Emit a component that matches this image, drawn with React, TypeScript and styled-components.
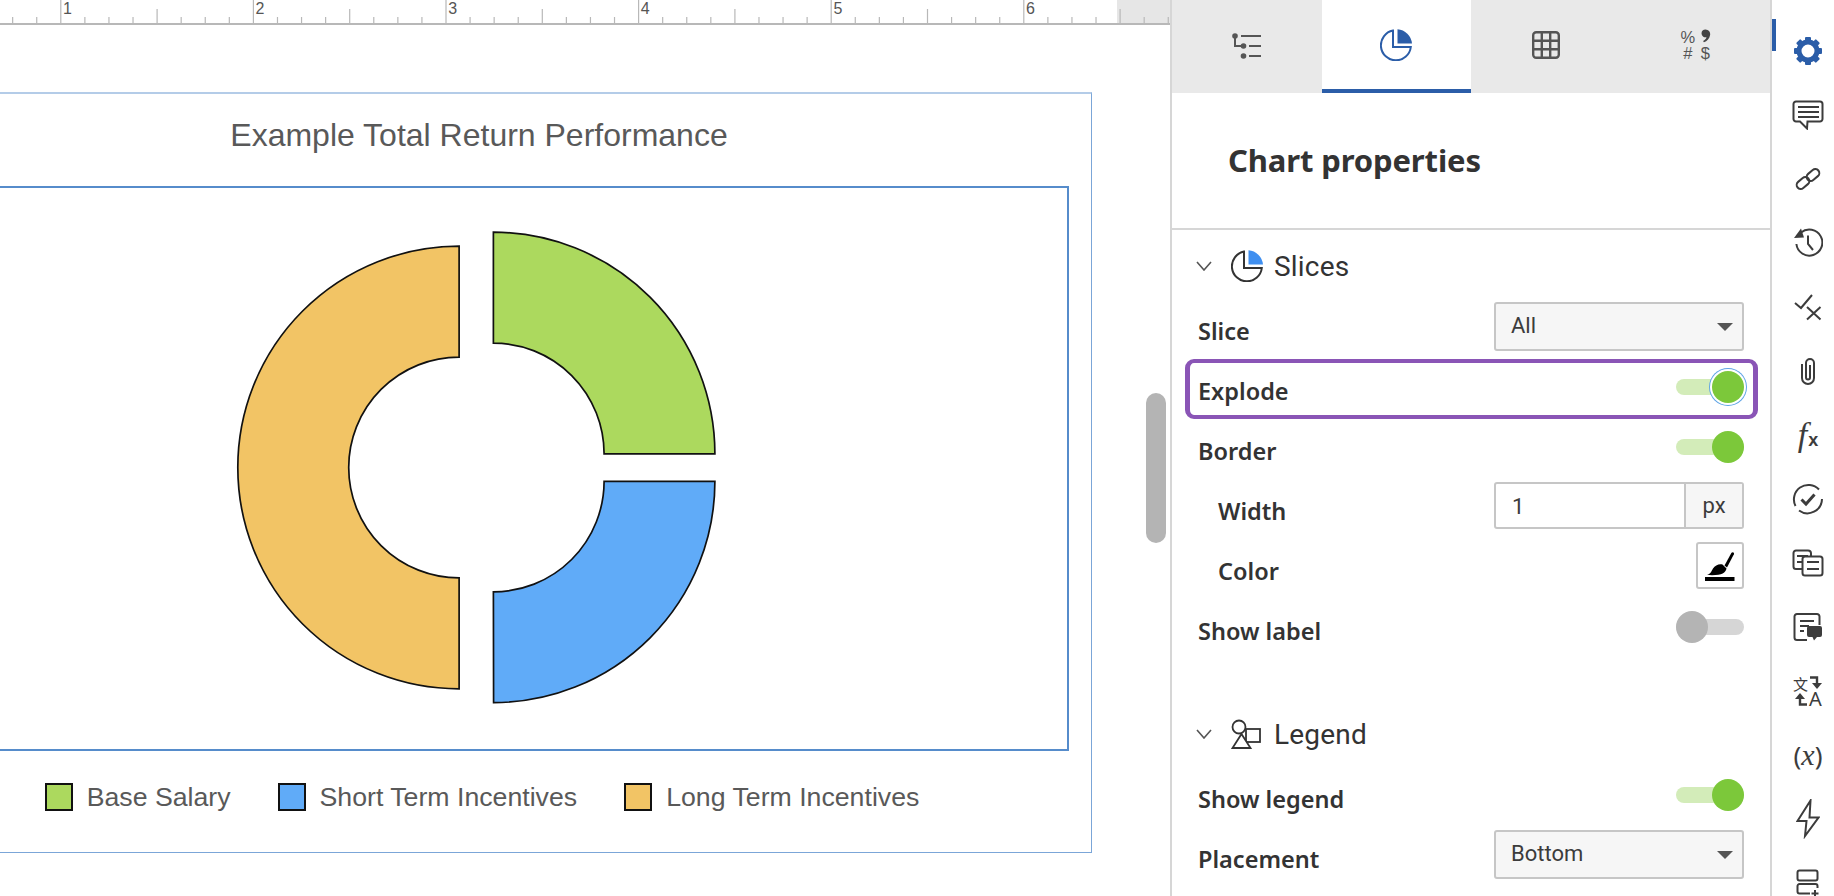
import React from "react";
import styled, { createGlobalStyle } from "styled-components";

const Global = createGlobalStyle`
  html, body { margin: 0; padding: 0; background: #fff; overflow: hidden; }
  #root { width: 1834px; height: 896px; }
  * { box-sizing: border-box; }
`;

const Page = styled.div`
  display: flex;
  width: 1834px;
  height: 896px;
  overflow: hidden;
  background: #fff;
  font-family: Roboto, "Noto Sans", sans-serif;
  color: #333;
`;

/* ---------- document canvas ---------- */
const Canvas = styled.main`
  position: relative;
  width: 1170px;
  flex: none;
  overflow: hidden;
`;
const RulerSvg = styled.svg`
  display: block;
  width: 1170px;
  height: 25px;
`;
const ChartFrame = styled.section`
  width: 1226px;
  height: 761px;
  margin: 67px 0 0 -134px;
  border: 1px solid #7ba6d8;
  border-top: 2px solid #b4cce8;
  display: flex;
  flex-direction: column;
  font-family: "Liberation Sans", Arial, sans-serif;
  color: #595959;
`;
const ChartTitle = styled.h2`
  margin: 0;
  height: 92px;
  padding-top: 21px;
  font-size: 32px;
  line-height: 40px;
  font-weight: 400;
  text-align: center;
`;
const PlotArea = styled.div`
  height: 565px;
  margin: 0 22px 0 23px;
  border: 2px solid #568ccb;
`;
const PlotSvg = styled.svg`
  display: block;
  width: 100%;
  height: 100%;
`;
const Legend = styled.div`
  display: flex;
  justify-content: center;
  gap: 47px;
  padding: 32px 0 0 6px;
`;
const LegendItem = styled.div`
  display: flex;
  align-items: center;
  gap: 14px;
  font-size: 26.7px;
  line-height: 28px;
`;
const Swatch = styled.span<{ $color: string }>`
  width: 28px;
  height: 28px;
  border: 2px solid #111;
  background: ${(p) => p.$color};
`;
const ScrollThumb = styled.div`
  position: absolute;
  left: 1146px;
  top: 393px;
  width: 20px;
  height: 150px;
  border-radius: 10px;
  background: #b4b4b4;
`;

/* ---------- properties panel ---------- */
const Panel = styled.aside`
  width: 602px;
  flex: none;
  height: 896px;
  overflow: hidden;
  border-left: 2px solid #d6d6d6;
  border-right: 2px solid #d6d6d6;
`;
const Tabs = styled.div`
  display: flex;
  height: 93px;
  background: #e9e9e9;
`;
const Tab = styled.div<{ $active?: boolean }>`
  flex: 1;
  display: flex;
  align-items: center;
  justify-content: center;
  padding-bottom: ${(p) => (p.$active ? "0" : "4px")};
  background: ${(p) => (p.$active ? "#fff" : "transparent")};
  border-bottom: ${(p) => (p.$active ? "4px solid #2b5da8" : "none")};
`;
const FormatGlyphs = styled.div`
  display: grid;
  grid-template-columns: 16px 11px;
  column-gap: 4px;
  grid-auto-rows: 16px;
  align-items: center;
  justify-items: center;
  font-family: "Liberation Sans", sans-serif;
  font-size: 16.5px;
  line-height: 16px;
  color: #555;
`;
const PanelTitle = styled.h1`
  margin: 0;
  height: 137px;
  padding: 0 0 2px 56px;
  display: flex;
  align-items: center;
  font-family: "Noto Sans", sans-serif;
  font-size: 31px;
  font-weight: 700;
  letter-spacing: -0.13px;
  color: #333;
  border-bottom: 2px solid #d6d6d6;
`;
const Body = styled.div`
  padding: 0 26px;
`;
const SectionHeader = styled.div<{ $spaced?: boolean }>`
  height: 72px;
  margin-top: ${(p) => (p.$spaced ? "36px" : "0")};
  display: flex;
  align-items: center;
`;
const Chevron = styled.svg`
  width: 16px;
  height: 10px;
  margin-left: -2px;
  margin-right: 19px;
  flex: none;
`;
const SectionIcon = styled.svg`
  width: 32px;
  height: 32px;
  margin-right: 11px;
  flex: none;
`;
const SectionName = styled.span`
  font-size: 28px;
  letter-spacing: 0.2px;
  font-weight: 400;
  color: #333;
`;
const Row = styled.div`
  position: relative;
  height: 60px;
  display: flex;
  justify-content: space-between;
  align-items: flex-start;
`;
const Label = styled.label<{ $indent?: boolean }>`
  line-height: 58px;
  padding-left: ${(p) => (p.$indent ? "20px" : "0")};
  font-family: "Noto Sans", sans-serif;
  font-size: 23.5px;
  font-weight: 600;
  color: #333;
`;
const ControlSlot = styled.div`
  height: 49px;
  display: flex;
  align-items: center;
`;
const Highlight = styled.div`
  position: absolute;
  left: -13px;
  right: -14px;
  top: -3px;
  height: 60px;
  border: 4px solid #8a55b6;
  border-left-width: 5px;
  border-right-width: 5px;
  border-radius: 9px;
  pointer-events: none;
`;
const Select = styled.div`
  width: 250px;
  height: 49px;
  display: flex;
  align-items: center;
  justify-content: space-between;
  padding: 0 9px 3px 15px;
  background: #f6f6f6;
  border: 2px solid #c6c6c6;
  border-radius: 3px;
  font-size: 22px;
  color: #3c3c3c;
`;
const Caret = styled.span`
  width: 0;
  height: 0;
  margin-top: 4px;
  border-left: 8px solid transparent;
  border-right: 8px solid transparent;
  border-top: 8px solid #555;
`;
const InputGroup = styled.div`
  width: 250px;
  height: 47px;
  display: flex;
  background: #fff;
  border: 2px solid #c6c6c6;
  border-radius: 3px;
  font-size: 22px;
  color: #3c3c3c;
`;
const InputValue = styled.div`
  flex: 1;
  display: flex;
  align-items: center;
  padding: 2px 0 0 16px;
`;
const InputUnit = styled.div`
  width: 58px;
  display: flex;
  align-items: center;
  justify-content: center;
  padding-bottom: 1px;
  background: #f6f6f6;
  border-left: 2px solid #c6c6c6;
`;
const ColorButton = styled.div`
  width: 48px;
  height: 47px;
  display: flex;
  align-items: center;
  justify-content: center;
  background: #fff;
  border: 2px solid #c6c6c6;
  border-radius: 3px;
`;
const ToggleTrack = styled.div<{ $on: boolean }>`
  position: relative;
  width: 68px;
  height: 16px;
  border-radius: 8px;
  background: ${(p) => (p.$on ? "#d3ecb9" : "#d6d6d6")};
`;
const ToggleKnob = styled.div<{ $on: boolean; $focus?: boolean }>`
  position: absolute;
  top: -8px;
  ${(p) => (p.$on ? "right: 0;" : "left: 0;")}
  width: 32px;
  height: 32px;
  border-radius: 50%;
  background: ${(p) => (p.$on ? "#7cc83a" : "#b4b4b4")};
  box-shadow: ${(p) => (p.$focus ? "0 0 0 2px #fff, 0 0 0 3px #5fa4e6" : "none")};
`;

/* ---------- right rail ---------- */
const Rail = styled.nav`
  position: relative;
  width: 62px;
  flex: none;
  height: 896px;
  overflow: hidden;
  padding: 19px 0 0 10px;
`;
const RailMark = styled.div`
  position: absolute;
  left: 0;
  top: 19px;
  width: 4px;
  height: 32px;
  background: #2b5da8;
`;
const RailSlot = styled.div`
  height: 64px;
  flex: none;
  display: flex;
  align-items: center;
  justify-content: center;
  color: #3c3c3c;
`;
const FxText = styled.span`
  font-family: "Liberation Serif", serif;
  font-style: italic;
  font-size: 34px;
  line-height: 1;
  color: #3c3c3c;
  & > small {
    font-family: "Liberation Sans", sans-serif;
    font-style: normal;
    font-weight: 700;
    font-size: 18px;
    margin-left: 1px;
  }
`;
const VarText = styled.span`
  font-family: "Noto Sans", sans-serif;
  font-size: 26px;
  line-height: 1;
  color: #3c3c3c;
  & > i {
    font-family: "Liberation Serif", serif;
    font-size: 30px;
  }
`;
const TranslateGrid = styled.div`
  display: grid;
  grid-template-columns: 15px 15px;
  grid-template-rows: 15px 16px;
  align-items: center;
  justify-items: center;
  color: #3c3c3c;
`;
const TranslateHan = styled.span`
  font-family: "Noto Sans CJK SC", sans-serif;
  font-size: 15px;
  line-height: 15px;
`;
const TranslateLatin = styled.span`
  font-family: "Noto Sans", sans-serif;
  font-size: 20px;
  line-height: 16px;
`;

/* ---------- drawings ---------- */
const Ruler = () => {
  const ticks: React.ReactNode[] = [];
  const step = 192.6 / 8;
  for (let i = -2; i < 47; i++) {
    const x = 60.8 + i * step;
    const m = ((i % 8) + 8) % 8;
    const top = m === 0 ? 0 : m === 4 ? 9 : 17;
    ticks.push(<line key={i} x1={x} x2={x} y1={top} y2={23} stroke="#b8b8b8" strokeWidth="1.2" />);
  }
  return (
    <RulerSvg viewBox="0 0 1170 25">
      <rect x="1117" y="0" width="53" height="23" fill="#e6e6e6" />
      {ticks}
      <rect x="0" y="23" width="1170" height="2" fill="#b8b8b8" />
      {[1, 2, 3, 4, 5, 6].map((n, i) => (
        <text key={n} x={63 + i * 192.6} y="14" fontSize="16" fontFamily="'Liberation Sans', sans-serif" fill="#555">
          {n}
        </text>
      ))}
    </RulerSvg>
  );
};

const Donut = () => (
  <PlotSvg viewBox="-109 188 1176 561">
    <g stroke="#111" strokeWidth="1.7" strokeLinejoin="miter">
      <path fill="#f2c465" d="M458.6 246A221.5 221.5 0 0 0 458.6 689V578A110.5 110.5 0 0 1 458.6 357Z" />
      <path fill="#acd95e" d="M492.9 232A221.8 221.8 0 0 1 714.6 453.8H603.7A110.8 110.8 0 0 0 492.9 343Z" />
      <path fill="#60abf8" d="M603.7 481.3H714.6A221.5 221.5 0 0 1 493.1 702.8L492.9 592A110.8 110.8 0 0 0 603.7 481.3Z" />
    </g>
  </PlotSvg>
);

const FilterTabIcon = () => (
  <svg width="32" height="28" viewBox="0 0 32 28" fill="#555" stroke="#555">
    <circle cx="4" cy="5" r="2.8" stroke="none" />
    <circle cx="12.5" cy="15" r="2.8" stroke="none" />
    <circle cx="12.5" cy="25" r="2.8" stroke="none" />
    <path d="M4 5V15H12M10 5H30M18 15H30M18 25H30" fill="none" strokeWidth="2" />
  </svg>
);

const PiePaths = ({ line, wedge }: { line: string; wedge: string }) => (
  <>
    <path d="M13 1.6A15 15 0 1 0 30.8 18H13Z" fill="none" stroke={line} strokeWidth="2" />
    <path d="M17.5 .3A15.8 15.8 0 0 1 32 14.5H17.5Z" fill={wedge} />
  </>
);

const GridTabIcon = () => (
  <svg width="28" height="28" viewBox="0 0 28 28" fill="none" stroke="#555" strokeWidth="2.4">
    <rect x="1.2" y="1.2" width="25.6" height="25.6" rx="3" />
    <path d="M9.8 1V27M18.2 1V27M1 9.8H27M1 18.2H27" />
  </svg>
);

const CommaMark = () => (
  <svg width="11" height="15" viewBox="0 0 11 15" fill="#444">
    <path d="M5.500 .5a4.600 4.600 0 0 1 4.600 5.400c-.5 3.600-3 6.200-6.200 7.400l-.8-1.300c1.800-1 3-2.200 3.400-3.800a4 4 0 0 1-5-4 4 4 0 0 1 4-3.700Z" />
  </svg>
);

const Gear = () => (
  <svg width="30" height="30" viewBox="0 0 30 30" fill="#2b5da8">
    <circle cx="15" cy="15" r="9" fill="none" stroke="#2b5da8" strokeWidth="5" />
    {[0, 45, 90, 135, 180, 225, 270, 315].map((a) => (
      <rect key={a} x="12" y="1" width="6" height="6" rx="1" transform={`rotate(${a} 15 15)`} />
    ))}
  </svg>
);

const Icon = styled.svg.attrs({ fill: "none", stroke: "#3c3c3c", strokeWidth: 2 })``;

const CommentIcon = () => (
  <Icon width="32" height="30" viewBox="0 0 32 30">
    <path d="M4 1.5H28A2.5 2.5 0 0 1 30.5 4V19A2.5 2.5 0 0 1 28 21.5H15.5L15 28.5L8 21.5H4A2.5 2.5 0 0 1 1.5 19V4A2.5 2.5 0 0 1 4 1.5Z" />
    <path d="M6 7H27M6 12H27M6 17H27" />
  </Icon>
);
const LinkIcon = () => (
  <Icon width="26" height="26" viewBox="0 0 26 26">
    <rect x="1" y="13" width="14" height="8" rx="4" transform="rotate(-40 8 17)" />
    <rect x="11" y="5" width="14" height="8" rx="4" transform="rotate(-40 18 9)" />
  </Icon>
);
const HistoryIcon = () => (
  <Icon width="30" height="30" viewBox="0 0 30 30">
    <path d="M8 4.6A13 13 0 1 1 3.4 16" />
    <path d="M1 10L8 .5L11 9.5Z" fill="#3c3c3c" stroke="none" />
    <path d="M15 7.5V16L20 22" />
  </Icon>
);
const CheckXIcon = () => (
  <Icon width="28" height="28" viewBox="0 0 28 28">
    <path d="M1 10L7 15L18 2M13 14L26.5 26.5M26.5 14L13 26.5" />
  </Icon>
);
const ClipIcon = () => (
  <Icon width="18" height="28" viewBox="0 0 18 28">
    <path d="M11 8V20.5A2 2 0 0 1 7 20.5V6A4 4 0 0 1 15 6V21A6 6 0 0 1 3 21V7" />
  </Icon>
);
const ApproveIcon = () => (
  <Icon width="32" height="32" viewBox="0 0 32 32">
    <path d="M30 16A14.500 14.500 0 0 1 7 27.500M3.500 23A14.500 14.500 0 0 1 27 6.500" />
    <path d="M9.500 16.500L14 21L22.500 11.500" strokeWidth="3" />
  </Icon>
);
const StackIcon = () => (
  <Icon width="32" height="28" viewBox="0 0 32 28">
    <path d="M10.500 20H4A2.500 2.500 0 0 1 1.500 17.500V4A2.500 2.500 0 0 1 4 1.500H16A3 3 0 0 1 19 4.500V7" />
    <rect x="10.500" y="7.500" width="20" height="19" rx="2.500" />
    <path d="M5 7H16M5 13H10M15 13H27M15 20H27" />
  </Icon>
);
const DocCommentIcon = () => (
  <Icon width="30" height="28" viewBox="0 0 30 28">
    <path d="M14 27H4A2.500 2.500 0 0 1 1.500 24.500V3.500A2.500 2.500 0 0 1 4 1H24A2.500 2.500 0 0 1 26.500 3.500V12" />
    <path d="M7 8H21M7 13H16M7 18H11" />
    <path d="M16 13H27A2 2 0 0 1 29 15V22A2 2 0 0 1 27 24H24L21 27.500L19.500 24H16A2 2 0 0 1 14 22V15A2 2 0 0 1 16 13Z" fill="#3c3c3c" stroke="none" />
  </Icon>
);
const ArrowDownLeft = () => (
  <svg width="14" height="14" viewBox="0 0 14 14" fill="#3c3c3c">
    <path d="M1 1.500H8V7" fill="none" stroke="#3c3c3c" strokeWidth="2.400" />
    <path d="M3 7H13L8 13Z" />
  </svg>
);
const ArrowUpRight = () => (
  <svg width="14" height="14" viewBox="0 0 14 14" fill="#3c3c3c">
    <path d="M13 12.500H6V7" fill="none" stroke="#3c3c3c" strokeWidth="2.400" />
    <path d="M1 7H11L6 1Z" />
  </svg>
);
const BoltIcon = () => (
  <Icon width="24" height="40" viewBox="0 0 24 40">
    <path d="M14.500 1.500L1.500 22H10.500L9 37L22.500 18.500H13.500Z" />
  </Icon>
);
const AddRowIcon = () => (
  <Icon width="24" height="28" viewBox="0 0 24 28">
    <rect x="1.500" y="1.500" width="20" height="10" rx="2" />
    <path d="M14 24.500H3.500A2 2 0 0 1 1.500 22.500V17A2 2 0 0 1 3.500 15H19.500A2 2 0 0 1 21.500 17V19" />
    <path d="M19 21V28M15.500 24.500H22.500" />
  </Icon>
);

const Switch = ({ on, focus }: { on: boolean; focus?: boolean }) => (
  <ControlSlot>
    <ToggleTrack $on={on}>
      <ToggleKnob $on={on} $focus={focus} />
    </ToggleTrack>
  </ControlSlot>
);

const ChevronDown = () => (
  <Chevron viewBox="0 0 16 10" fill="none" stroke="#555" strokeWidth="1.600">
    <path d="M1 1L8 9L15 1" />
  </Chevron>
);

export default function App() {
  return (
    <Page>
      <Global />
      <Canvas>
        <Ruler />
        <ChartFrame>
          <ChartTitle>Example Total Return Performance</ChartTitle>
          <PlotArea>
            <Donut />
          </PlotArea>
          <Legend>
            <LegendItem><Swatch $color="#acd95e" />Base Salary</LegendItem>
            <LegendItem><Swatch $color="#60abf8" />Short Term Incentives</LegendItem>
            <LegendItem><Swatch $color="#f2c465" />Long Term Incentives</LegendItem>
          </Legend>
        </ChartFrame>
        <ScrollThumb />
      </Canvas>

      <Panel>
        <Tabs>
          <Tab><FilterTabIcon /></Tab>
          <Tab $active>
            <svg width="32" height="32" viewBox="0 0 32 32"><PiePaths line="#2b5da8" wedge="#2b5da8" /></svg>
          </Tab>
          <Tab><GridTabIcon /></Tab>
          <Tab>
            <FormatGlyphs>
              <span>%</span><CommaMark />
              <span>#</span><span>$</span>
            </FormatGlyphs>
          </Tab>
        </Tabs>
        <PanelTitle>Chart properties</PanelTitle>
        <Body>
          <SectionHeader>
            <ChevronDown />
            <SectionIcon viewBox="0 0 32 32"><PiePaths line="#333" wedge="#3f8ff0" /></SectionIcon>
            <SectionName>Slices</SectionName>
          </SectionHeader>
          <Row>
            <Label>Slice</Label>
            <Select>All<Caret /></Select>
          </Row>
          <Row>
            <Highlight />
            <Label>Explode</Label>
            <Switch on focus />
          </Row>
          <Row>
            <Label>Border</Label>
            <Switch on />
          </Row>
          <Row>
            <Label $indent>Width</Label>
            <InputGroup>
              <InputValue>1</InputValue>
              <InputUnit>px</InputUnit>
            </InputGroup>
          </Row>
          <Row>
            <Label $indent>Color</Label>
            <ColorButton>
              <svg width="30" height="30" viewBox="0 0 30 30" fill="#000">
                <path d="M19.500 14.500L26.500 1.800C27.500 .4 29.600 1.500 28.900 3.200L22 16.500Z" />
                <path d="M17.500 13.500L21.500 17.500C20.500 22.500 16 24.800 2 24C6 22.500 6.500 20 8 17.500C10 14.500 14 12.500 17.500 13.500Z" />
                <rect x="0" y="26" width="29.500" height="4" />
              </svg>
            </ColorButton>
          </Row>
          <Row>
            <Label>Show label</Label>
            <Switch on={false} />
          </Row>
          <SectionHeader $spaced>
            <ChevronDown />
            <SectionIcon viewBox="0 0 32 32" fill="none" stroke="#333" strokeWidth="1.800">
              <circle cx="8" cy="9" r="6.500" />
              <rect x="15" y="11" width="14" height="13" />
              <path d="M10.500 16L19.500 30H1.500Z" fill="#fff" />
            </SectionIcon>
            <SectionName>Legend</SectionName>
          </SectionHeader>
          <Row>
            <Label>Show legend</Label>
            <Switch on />
          </Row>
          <Row>
            <Label>Placement</Label>
            <Select>Bottom<Caret /></Select>
          </Row>
        </Body>
      </Panel>

      <Rail>
        <RailMark />
        <RailSlot><Gear /></RailSlot>
        <RailSlot><CommentIcon /></RailSlot>
        <RailSlot><LinkIcon /></RailSlot>
        <RailSlot><HistoryIcon /></RailSlot>
        <RailSlot><CheckXIcon /></RailSlot>
        <RailSlot><ClipIcon /></RailSlot>
        <RailSlot><FxText>f<small>x</small></FxText></RailSlot>
        <RailSlot><ApproveIcon /></RailSlot>
        <RailSlot><StackIcon /></RailSlot>
        <RailSlot><DocCommentIcon /></RailSlot>
        <RailSlot>
          <TranslateGrid>
            <TranslateHan>文</TranslateHan><ArrowDownLeft />
            <ArrowUpRight /><TranslateLatin>A</TranslateLatin>
          </TranslateGrid>
        </RailSlot>
        <RailSlot><VarText>(<i>x</i>)</VarText></RailSlot>
        <RailSlot><BoltIcon /></RailSlot>
        <RailSlot><AddRowIcon /></RailSlot>
      </Rail>
    </Page>
  );
}
